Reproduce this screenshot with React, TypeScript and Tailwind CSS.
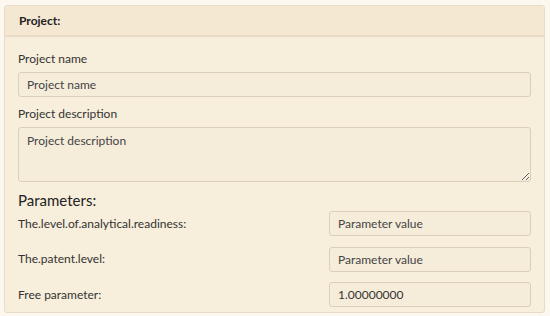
import React from 'react';

const font = { fontFamily: 'Lato, "Open Sans", sans-serif' };

const inputBase =
  'h-[25px] rounded-[3px] border border-[#dccfb9] bg-[#f6ecda] px-[8px] text-[12px] text-[#333] outline-none placeholder:text-[#444]';

const params = [
  { label: 'The.level.of.analytical.readiness:', value: '', placeholder: 'Parameter value' },
  { label: 'The.patent.level:', value: '', placeholder: 'Parameter value' },
  { label: 'Free parameter:', value: '1.00000000', placeholder: '' },
];

const App: React.FC = () => {
  return (
    <div className="h-[316px] w-[550px] overflow-hidden bg-[#fcf8f0] px-[4px] pt-[5px] pb-[3px]" style={font}>
      <div className="h-full w-[541px] rounded-[3px] border border-[#e8dcc6] bg-[#f7eedb]">
        {/* header */}
        <div className="flex h-[31px] items-center border-b-2 border-[#eadcc4] bg-[#f5e8d2] px-[14px]">
          <span className="text-[12px] font-bold text-[#222]">Project:</span>
        </div>

        <div className="px-[13px] pt-[14px]">
          <div className="text-[12px] leading-[16px] text-[#333]">Project name</div>
          <input className={`${inputBase} mt-[5px] w-full`} placeholder="Project name" readOnly />

          <div className="mt-[9px] text-[12px] leading-[16px] text-[#333]">Project description</div>
          <textarea
            className="mt-[5px] block h-[55px] w-full resize-y rounded-[3px] border border-[#dccfb9] bg-[#f6ecda] px-[8px] pt-[4px] text-[12px] text-[#333] outline-none placeholder:text-[#444]"
            placeholder="Project description"
            readOnly
          />

          <div className="mt-[8px] text-[15px] leading-[20px] text-[#222]">Parameters:</div>

          <div className="mt-[1px] flex flex-col gap-[10.5px]">
            {params.map((p) => (
              <div key={p.label} className="flex items-center justify-between">
                <span className="text-[12px] text-[#333]">{p.label}</span>
                <input
                  className={`${inputBase} w-[202px] shrink-0`}
                  placeholder={p.placeholder}
                  defaultValue={p.value}
                  readOnly
                />
              </div>
            ))}
          </div>
        </div>
      </div>
    </div>
  );
};

export default App;
